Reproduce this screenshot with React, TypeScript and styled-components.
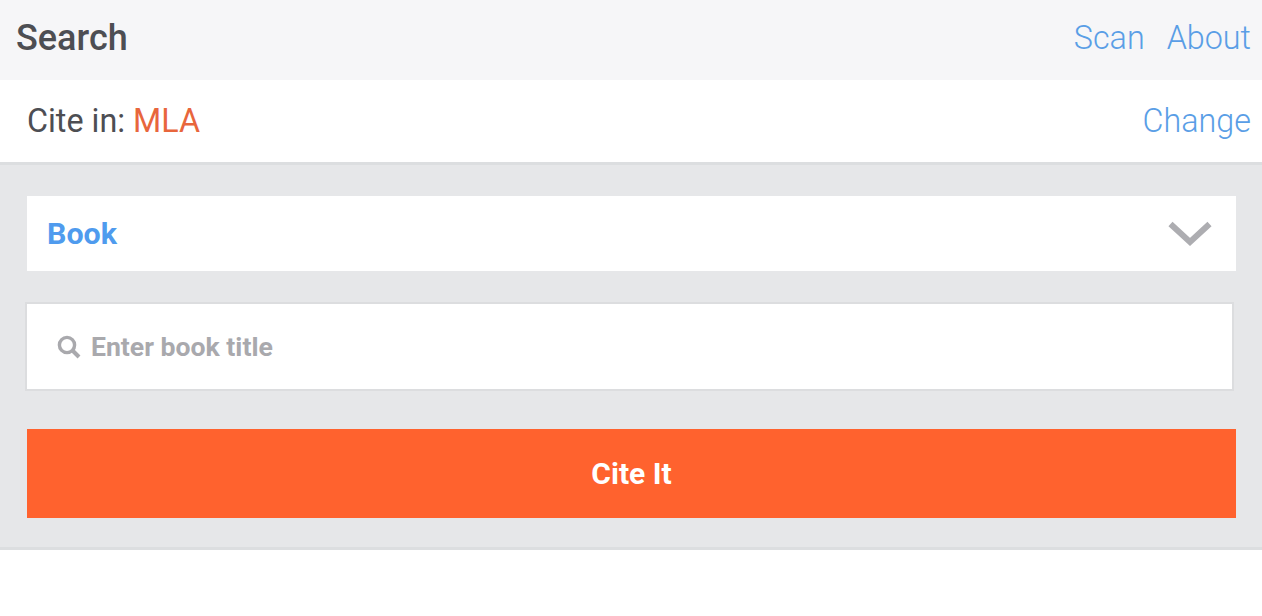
import React from "react";
import styled, { createGlobalStyle } from "styled-components";

const GlobalStyle = createGlobalStyle`
  html, body {
    margin: 0;
    padding: 0;
    background: #fff;
    font-family: Roboto, "Liberation Sans", sans-serif;
  }
`;

const App: React.FC = () => {
  return (
    <>
      <GlobalStyle />
      <Page>
        <TopBar>
          <Title>Search</Title>
          <TopLinks>
            <LinkText>Scan</LinkText>
            <LinkText>About</LinkText>
          </TopLinks>
        </TopBar>
        <StyleRow>
          <CiteLabel>
            Cite in: <Format>MLA</Format>
          </CiteLabel>
          <LinkText>Change</LinkText>
        </StyleRow>
        <Panel>
          <SourceSelect>
            <SourceName>Book</SourceName>
            <svg width="44" height="26" viewBox="0 0 44 26" fill="none">
              <path d="M2.5 3 L22 21 L41.5 3" stroke="#adadb1" strokeWidth="6" />
            </svg>
          </SourceSelect>
          <SearchBox>
            <svg width="24" height="24" viewBox="0 0 24 24" fill="none">
              <circle cx="10" cy="10" r="7.6" stroke="#a9a9ad" strokeWidth="3.4" />
              <path d="M15.5 15.5 L22 22" stroke="#a9a9ad" strokeWidth="4" />
            </svg>
            <Placeholder>Enter book title</Placeholder>
          </SearchBox>
          <CiteButton>Cite It</CiteButton>
        </Panel>
      </Page>
    </>
  );
};

export default App;

const Page = styled.div`
  width: 1262px;
  height: 616px;
  overflow: hidden;
  background: #fff;
`;

const TopBar = styled.div`
  height: 80px;
  box-sizing: border-box;
  padding: 0 11px 5px 16px;
  display: flex;
  align-items: center;
  justify-content: space-between;
  background: #f6f6f8;
`;

const Title = styled.h1`
  margin: 0;
  font-size: 36px;
  font-weight: 500;
  color: #4d4e53;
`;

const TopLinks = styled.div`
  display: flex;
  gap: 22px;
`;

const LinkText = styled.span`
  font-size: 32.3px;
  font-weight: 300;
  color: #5a9ee6;
`;

const StyleRow = styled.div`
  height: 85px;
  box-sizing: border-box;
  padding: 0 11px 0 27px;
  display: flex;
  align-items: center;
  justify-content: space-between;
  background: #fff;
  border-bottom: 3px solid #dcdee0;
`;

const CiteLabel = styled.div`
  font-size: 32.3px;
  font-weight: 400;
  color: #4d4e53;
`;

const Format = styled.span`
  color: #e8663c;
`;

const Panel = styled.div`
  height: 385px;
  box-sizing: border-box;
  padding: 31px 26px 0 27px;
  background: #e6e7e9;
  border-bottom: 3px solid #dcdee0;
`;

const SourceSelect = styled.div`
  height: 75px;
  box-sizing: border-box;
  padding: 0 24px 0 20px;
  display: flex;
  align-items: center;
  justify-content: space-between;
  background: #fff;
`;

const SourceName = styled.span`
  font-size: 30.4px;
  font-weight: 700;
  color: #4f9bee;
`;

const SearchBox = styled.div`
  height: 89px;
  width: 1209px;
  box-sizing: border-box;
  margin: 31px 0 38px -2px;
  padding: 0 0 0 30px;
  display: flex;
  align-items: center;
  gap: 10px;
  background: #fff;
  border: 2px solid #dcdddf;
`;

const Placeholder = styled.span`
  font-size: 26.6px;
  font-weight: 700;
  color: #a9a9ad;
`;

const CiteButton = styled.div`
  height: 89px;
  display: flex;
  align-items: center;
  justify-content: center;
  background: #ff622e;
  color: #fff;
  font-size: 30px;
  font-weight: 700;
`;
